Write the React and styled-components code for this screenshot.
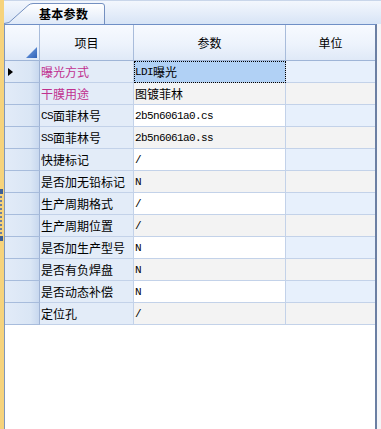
import React from 'react';
import styled, { createGlobalStyle } from 'styled-components';

const Global = createGlobalStyle`
  html, body { margin: 0; padding: 0; }
  body {
    width: 381px; height: 429px; overflow: hidden;
    font-family: "Noto Sans CJK SC", "Liberation Sans", sans-serif;
    font-size: 12px; color: #000; background: #eef1f6;
  }
`;

const Page = styled.div`
  display: flex;
  width: 381px;
  height: 429px;
`;

const Splitter = styled.div`
  width: 4px;
  flex: none;
  background: #f6d37c;
  display: flex;
  flex-direction: column;
  justify-content: center;
  align-items: flex-start;
`;

const GripEnd = styled.div`
  width: 3px;
  height: 5px;
  background: #3e5f95;
`;

const GripDots = styled.div`
  width: 2px;
  height: 38px;
  margin: 2px 0;
  background: repeating-linear-gradient(to bottom, #6d7f9e 0 2px, transparent 2px 4px);
`;

const Main = styled.div`
  flex: 1;
  display: flex;
  flex-direction: column;
  min-width: 0;
`;

const TabStrip = styled.div`
  height: 24px;
  flex: none;
  display: flex;
  align-items: flex-end;
  background: linear-gradient(to bottom, #f3f7fd 0%, #e3ecf9 60%, #d7e4f6 100%);
  border-top: 1px solid #c9d6ea;
  box-sizing: border-box;
`;

const Tab = styled.div`
  position: relative;
  width: 101px;
  height: 21px;
  padding-left: 35px;
  box-sizing: border-box;
  display: flex;
  align-items: center;
  font-weight: bold;
  font-size: 12px;
  letter-spacing: 0.3px;
  color: #000;
`;

const TabShape = styled.svg`
  position: absolute;
  left: 0;
  top: 0;
  z-index: 0;
`;

const TabLabel = styled.span`
  position: relative;
  z-index: 1;
  line-height: 20px;
`;

const GridArea = styled.div`
  flex: 1;
  display: flex;
  min-height: 0;
`;

const Grid = styled.div`
  width: 370px;
  flex: none;
  background: #fff;
  border-left: 1px solid #7f96ba;
  border-top: 1px solid #6f8fc6;
  border-right: 2px solid #6b7fa3;
  display: flex;
  flex-direction: column;
`;

const Row = styled.div`
  display: grid;
  grid-template-columns: 35px 94px 152px 1fr;
  height: ${p => p.$h}px;
`;

const HeadCell = styled.div`
  position: relative;
  display: flex;
  align-items: center;
  justify-content: center;
  background: linear-gradient(to bottom, #f7faff 0%, #edf3fc 55%, #dfe9f7 100%);
  border-right: 1px solid #a8bcdb;
  border-bottom: 1px solid #9fb5d7;
  &:last-child { border-right: none; }
`;

const Corner = styled.svg`
  position: absolute;
  right: 2px;
  bottom: 2px;
`;

const RowHead = styled.div`
  display: flex;
  align-items: center;
  padding-left: 3px;
  background: linear-gradient(to right, #e2ebf8 0%, #dae6f5 75%, #c8d8ef 100%);
  border-right: 1px solid #9fb3d4;
  border-bottom: 1px solid #a7bcdc;
`;

const Arrow = styled.svg`
  display: block;
`;

const LabelCell = styled.div`
  display: flex;
  align-items: center;
  padding-left: 1px;
  white-space: nowrap;
  overflow: hidden;
  background: #e3ecf8;
  color: ${p => (p.$hl ? '#c0308f' : '#000')};
  border-right: 1px solid #c3d2e9;
  border-bottom: 1px solid #c3d2e9;
`;

const ValueCell = styled.div`
  display: flex;
  align-items: center;
  padding-left: 1px;
  white-space: nowrap;
  overflow: hidden;
  box-sizing: border-box;
  background: ${p => (p.$sel ? '#b1d1f5' : p.$alt ? '#f3f3f3' : '#ffffff')};
  border-right: 1px solid #c3d2e9;
  border-bottom: 1px solid #c3d2e9;
  ${p => p.$sel && `outline: 1px dotted #000; outline-offset: -1px;`}
`;

const UnitCell = styled.div`
  background: ${p => (p.$alt ? '#f3f3f3' : '#e7f0fc')};
  border-bottom: 1px solid #c3d2e9;
`;

const Ascii = styled.span`
  font-family: "Liberation Mono", "DejaVu Sans Mono", monospace;
  font-size: 11px;
  letter-spacing: -0.6px;
`;

const Filler = styled.div`
  flex: 1;
  background: #fff;
`;

const RightGap = styled.div`
  flex: 1;
  background: #f4f5f8;
`;

const rows = [
  { label: '曝光方式', value: 'LDI曝光', hl: true },
  { label: '干膜用途', value: '图镀菲林', hl: true },
  { label: 'CS面菲林号', value: '2b5n6061a0.cs' },
  { label: 'SS面菲林号', value: '2b5n6061a0.ss' },
  { label: '快捷标记', value: '/' },
  { label: '是否加无铅标记', value: 'N' },
  { label: '生产周期格式', value: '/' },
  { label: '生产周期位置', value: '/' },
  { label: '是否加生产型号', value: 'N' },
  { label: '是否有负焊盘', value: 'N' },
  { label: '是否动态补偿', value: 'N' },
  { label: '定位孔', value: '/' },
];

function MixedText({ text }) {
  const parts = text.match(/[\x00-\x7f]+|[^\x00-\x7f]+/g) || [];
  return parts.map((p, i) =>
    /^[\x00-\x7f]+$/.test(p) ? <Ascii key={i}>{p}</Ascii> : <span key={i}>{p}</span>
  );
}

export default function App() {
  return (
    <>
      <Global />
      <Page>
        <Splitter>
          <GripEnd />
          <GripDots />
          <GripEnd />
        </Splitter>
        <Main>
          <TabStrip>
            <Tab>
              <TabShape width="101" height="21" viewBox="0 0 101 21">
                <defs>
                  <linearGradient id="tabg" x1="0" y1="0" x2="0" y2="1">
                    <stop offset="0" stopColor="#ffffff" />
                    <stop offset="1" stopColor="#dfe9f8" />
                  </linearGradient>
                </defs>
                <path d="M0,21 L5,19.5 L24,2.5 Q26,1 29,1 L98,1 Q100,1 100,3 L100,21 Z" fill="url(#tabg)" />
                <path d="M0,20.5 L5,19.5 L24,2.5 Q26,0.5 29,0.5 L98,0.5 Q100.5,0.5 100.5,3 L100.5,21" fill="none" stroke="#7490c0" strokeWidth="1" />
              </TabShape>
              <TabLabel>基本参数</TabLabel>
            </Tab>
          </TabStrip>
          <GridArea>
            <Grid>
              <Row $h={36}>
                <HeadCell>
                  <Corner width="11" height="11" viewBox="0 0 11 11">
                    <defs>
                      <linearGradient id="cg" x1="0" y1="0" x2="1" y2="1">
                        <stop offset="0" stopColor="#7aa6e6" />
                        <stop offset="1" stopColor="#2f62b8" />
                      </linearGradient>
                    </defs>
                    <path d="M11,0 L11,11 L0,11 Z" fill="url(#cg)" />
                  </Corner>
                </HeadCell>
                <HeadCell>项目</HeadCell>
                <HeadCell>参数</HeadCell>
                <HeadCell>单位</HeadCell>
              </Row>
              {rows.map((r, i) => (
                <Row key={i} $h={22}>
                  <RowHead>
                    {i === 0 && (
                      <Arrow width="5" height="8" viewBox="0 0 5 8">
                        <path d="M0,0 L5,4 L0,8 Z" fill="#000" />
                      </Arrow>
                    )}
                  </RowHead>
                  <LabelCell $hl={r.hl}>
                    <MixedText text={r.label} />
                  </LabelCell>
                  <ValueCell $sel={i === 0} $alt={i % 2 === 1}>
                    <MixedText text={r.value} />
                  </ValueCell>
                  <UnitCell $alt={i % 2 === 1} />
                </Row>
              ))}
              <Filler />
            </Grid>
            <RightGap />
          </GridArea>
        </Main>
      </Page>
    </>
  );
}
